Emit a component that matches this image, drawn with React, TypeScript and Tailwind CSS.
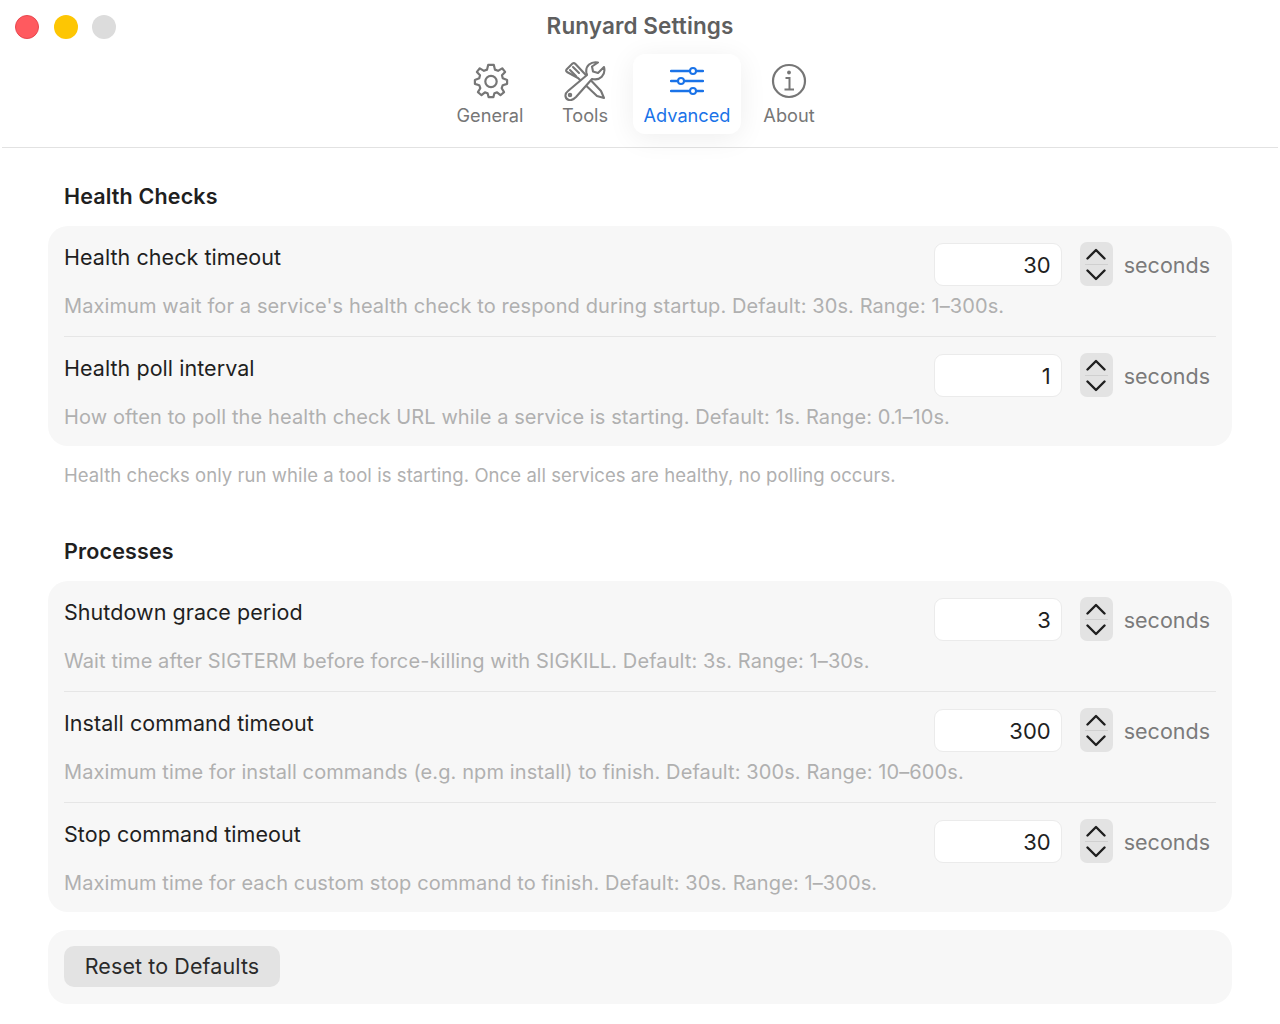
type Setting = { label: string; value: string; help: string };

const healthSettings: Setting[] = [
  {
    label: "Health check timeout",
    value: "30",
    help: "Maximum wait for a service's health check to respond during startup. Default: 30s. Range: 1–300s.",
  },
  {
    label: "Health poll interval",
    value: "1",
    help: "How often to poll the health check URL while a service is starting. Default: 1s. Range: 0.1–10s.",
  },
];

const processSettings: Setting[] = [
  {
    label: "Shutdown grace period",
    value: "3",
    help: "Wait time after SIGTERM before force-killing with SIGKILL. Default: 3s. Range: 1–30s.",
  },
  {
    label: "Install command timeout",
    value: "300",
    help: "Maximum time for install commands (e.g. npm install) to finish. Default: 300s. Range: 10–600s.",
  },
  {
    label: "Stop command timeout",
    value: "30",
    help: "Maximum time for each custom stop command to finish. Default: 30s. Range: 1–300s.",
  },
];

function GearIcon() {
  return (
    <svg width="36" height="36" viewBox="0 0 38 38" fill="none" stroke="currentColor" strokeWidth="2.3" strokeLinejoin="round" className="ml-[2px]">
      <path d="M16 2 H22 L23.2 7 L26.4 8.3 L30.8 5.6 L33.9 9.4 L30.6 13 L31.4 16.2 L36 18 V22 L31.4 23.4 L30.3 26.6 L32.8 30.8 L29 34 L25.4 31 L22.6 32 L21.5 36 H16.5 L15.4 32 L12.6 31 L9 34 L5.2 30.8 L7.7 26.6 L6.6 23.4 L2 22 V18 L6.6 16.2 L7.4 13 L4.1 9.4 L7.2 5.6 L11.6 8.3 L14.8 7 Z" />
      <circle cx="19" cy="19.5" r="6" />
    </svg>
  );
}

function ToolsIcon() {
  return (
    <svg width="42" height="40" viewBox="0 0 42 40" fill="none" stroke="currentColor" strokeWidth="2.1" strokeLinejoin="round" strokeLinecap="round">
      <path d="M2.5 8.5 L8.5 2.5 Q10 1.5 11.5 3 L19 11 L37 30 L40 37 L33 35 L14 17 L3 11 Q1.5 10 2.5 8.5 Z" />
      <path d="M9 6 L15 12 M6 9 L12 15" />
      <path d="M40 6 L34 12 L29 10.5 L28 5.5 L34 1.5 C27 0 21 5 22.5 12 L23 14 L4 30 C0 33 1 38 5 39 C8 40 10 38 12 36 L28 18 C36 20 42 14 40 6 Z" fill="#fff" />
      <circle cx="6" cy="34" r="1.2" />
    </svg>
  );
}

function SlidersIcon() {
  return (
    <svg width="34" height="28" viewBox="0 0 34 28" fill="none" stroke="currentColor" strokeWidth="2.3">
      <path d="M1 4 H20 M26 4 H33 M1 14 H8 M14 14 H33 M1 24 H20 M26 24 H33" strokeLinecap="round" />
      <circle cx="23" cy="4" r="3" strokeWidth="2" />
      <circle cx="11" cy="14" r="3" strokeWidth="2" />
      <circle cx="23" cy="24" r="3" strokeWidth="2" />
    </svg>
  );
}

function InfoIcon() {
  return (
    <svg width="36" height="36" viewBox="0 0 36 36" fill="none" stroke="currentColor" strokeWidth="2.2">
      <circle cx="18" cy="18" r="16" />
      <circle cx="18" cy="9.5" r="1.9" fill="currentColor" stroke="none" />
      <path d="M14.5 15 H18.5 V26 M13.5 26.5 H23" strokeWidth="2" />
    </svg>
  );
}

function Stepper() {
  return (
    <div className="w-[33px] h-[44px] ml-[18px] bg-[#e3e3e3] rounded-[7px] flex flex-col items-center justify-center text-[#1f1f1f]">
      <svg width="20" height="12" viewBox="0 0 20 12" fill="none" stroke="currentColor" strokeWidth="2.4" strokeLinecap="round" strokeLinejoin="round">
        <path d="M1.5 10.5 L10 2 L18.5 10.5" />
      </svg>
      <div className="w-[23px] h-px bg-[#d0d0d0] my-[4px]" />
      <svg width="20" height="12" viewBox="0 0 20 12" fill="none" stroke="currentColor" strokeWidth="2.4" strokeLinecap="round" strokeLinejoin="round">
        <path d="M1.5 1.5 L10 10 L18.5 1.5" />
      </svg>
    </div>
  );
}

function Tab({ label, active, width, icon }: { label: string; active?: boolean; width: string; icon: React.ReactNode }) {
  return (
    <div
      className={`${width} h-[80px] flex flex-col items-center rounded-[12px] ${
        active ? "bg-white text-[#1a73e8] shadow-[0_4px_28px_rgba(0,0,0,0.07)]" : "text-[#767676]"
      }`}>
      <div className="h-[44px] mt-[5px] flex items-center justify-center">{icon}</div>
      <span className="text-[18.2px] leading-[24px]">{label}</span>
    </div>
  );
}

function SettingRow({ setting, last }: { setting: Setting; last: boolean }) {
  return (
    <div className={`pt-[17px] ${last ? "h-[109px]" : "h-[111px] border-b-[1.5px] border-[#e6e6e6]"}`}>
      <div className="flex items-start justify-between -mt-px">
        <span className="mt-px text-[21.5px] leading-[28px] tracking-[0.05px] text-[#1f1f1f]">{setting.label}</span>
        <div className="flex items-center mr-[6px]">
          <div className="w-[128px] h-[43px] bg-white border border-[#ebebeb] rounded-[9px] flex items-center justify-end pr-[10px] pt-[2px] text-[22px] text-[#1f1f1f]">
            {setting.value}
          </div>
          <Stepper />
          <span className="ml-[11px] pt-[2px] text-[21.5px] text-[#7b7b7b]">seconds</span>
        </div>
      </div>
      <p className="mt-[7px] text-[20px] leading-[26px] tracking-[0.1px] text-[#b0b0b0]">{setting.help}</p>
    </div>
  );
}

function Section({ title, settings }: { title: string; settings: Setting[] }) {
  return (
    <>
      <h2 className="px-[16px] text-[21.5px] leading-[28px] tracking-[0.15px] font-semibold text-[#1f1f1f]">{title}</h2>
      <div className="mt-[16px] px-[16px] bg-[#f7f7f7] rounded-[20px]">
        {settings.map((s, i) => (
          <SettingRow key={s.label} setting={s} last={i === settings.length - 1} />
        ))}
      </div>
    </>
  );
}

export default function App() {
  return (
    <div className="w-[1280px] h-[1024px] bg-white overflow-hidden font-['Inter','Liberation_Sans',sans-serif]">
      <header className="mx-[2px] h-[148px] border-b-[1.5px] border-[#e2e2e2]">
        <div className="h-[54px] grid grid-cols-[1fr_auto_1fr] items-center">
          <div className="flex gap-[14.5px] pl-[13px]">
            <span className="w-[24px] h-[24px] rounded-full bg-[#ff5a5f] border border-[#e8474f]" />
            <span className="w-[24px] h-[24px] rounded-full bg-[#fdc603]" />
            <span className="w-[24px] h-[24px] rounded-full bg-[#dcdcdc]" />
          </div>
          <h1 className="text-[22.5px] tracking-[0.1px] font-semibold text-[#5f5f5f] -translate-y-px">Runyard Settings</h1>
          <div />
        </div>
        <nav className="flex justify-center">
          <Tab width="w-[94px]" label="General" icon={<GearIcon />} />
          <Tab width="w-[96px]" label="Tools" icon={<ToolsIcon />} />
          <Tab width="w-[108px]" label="Advanced" active icon={<SlidersIcon />} />
          <Tab width="w-[96px]" label="About" icon={<InfoIcon />} />
        </nav>
      </header>
      <main className="px-[48px] pt-[34px]">
        <Section title="Health Checks" settings={healthSettings} />
        <p className="mt-[16px] px-[16px] text-[18.5px] leading-[26px] tracking-[0.07px] text-[#b0b0b0]">
          Health checks only run while a tool is starting. Once all services are healthy, no polling occurs.
        </p>
        <div className="h-[49px]" />
        <Section title="Processes" settings={processSettings} />
        <div className="mt-[18px] h-[74px] px-[16px] pb-[1px] bg-[#f7f7f7] rounded-[20px] flex items-center">
          <button className="w-[216px] h-[41px] bg-[#e3e3e3] rounded-[10px] text-[21.5px] tracking-[0.1px] text-[#2a2a2a]">Reset to Defaults</button>
        </div>
      </main>
    </div>
  );
}
